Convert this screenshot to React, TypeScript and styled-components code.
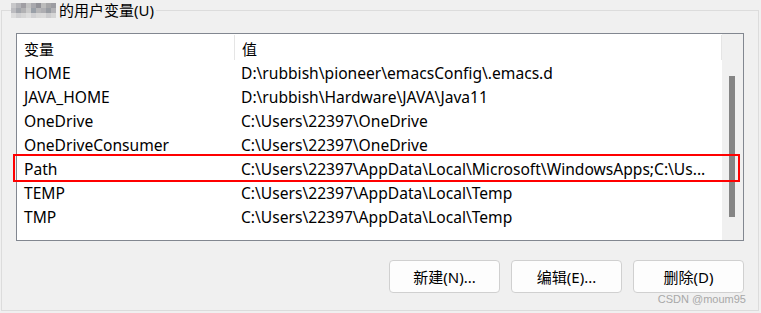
import React from "react";
import styled, { createGlobalStyle } from "styled-components";

const GlobalStyle = createGlobalStyle`
  html, body {
    margin: 0;
    padding: 0;
    background: #f0f0f0;
  }
  body {
    font-family: "Noto Sans", "Noto Sans CJK SC", sans-serif;
    color: #000;
  }
`;

const Page = styled.div`
  position: relative;
  width: 761px;
  height: 313px;
  padding: 0 0 0 1px;
  box-sizing: border-box;
  overflow: hidden;
`;

const Group = styled.fieldset`
  margin: 0;
  width: 758px;
  height: 311px;
  box-sizing: border-box;
  border: 1px solid #dcdcdc;
  padding: 12px 14px 17px 14px;
  display: flex;
  flex-direction: column;
`;

const Legend = styled.legend`
  margin-left: -5px;
  padding: 0 2px 0 0;
  font-size: 15px;
  line-height: 21px;
  display: flex;
  align-items: center;
  gap: 1px;
`;

const Mosaic = styled.span`
  display: inline-grid;
  grid-template-columns: repeat(9, 5px);
  grid-template-rows: repeat(3, 5px);
  margin-right: 2px;
`;

const Pixel = styled.span<{ $c: string }>`
  background: ${(p) => p.$c};
`;

const ListBox = styled.div`
  height: 208px;
  box-sizing: border-box;
  border: 1px solid #828790;
  background: #fff;
  display: grid;
  grid-template-columns: 1fr 21px;
`;

const Table = styled.div`
  display: flex;
  flex-direction: column;
  min-width: 0;
`;

const HeaderRow = styled.div`
  display: grid;
  grid-template-columns: 217px 487px 1px;
  height: 27px;
  align-items: center;
  font-size: 15px;
`;

const HeaderCell = styled.div`
  padding-left: 7px;
  padding-top: 1px;
`;

const HeaderDivider = styled.div`
  width: 1px;
  height: 25px;
  align-self: start;
  margin-top: 1px;
  background: #e5e5e5;
`;

const HeaderCellWrap = styled.div`
  display: flex;
  align-items: center;
  height: 100%;
`;

const Row = styled.div`
  position: relative;
  display: grid;
  grid-template-columns: 218px 487px;
  height: 24px;
  align-items: center;
  font-size: 15.6px;
  white-space: nowrap;
`;

const NameCell = styled.div`
  padding-left: 7px;
  overflow: hidden;
`;

const ValueCell = styled.div`
  padding-left: 6px;
  overflow: hidden;
  text-overflow: ellipsis;
`;

const Highlight = styled.div`
  position: absolute;
  z-index: 2;
  left: -4px;
  top: -3px;
  width: 727px;
  height: 28px;
  box-sizing: border-box;
  border: 2px solid #ff0000;
  pointer-events: none;
`;

const ScrollTrack = styled.div`
  background: #f0f0f0;
  position: relative;
`;

const ScrollThumb = styled.div`
  position: absolute;
  left: 7px;
  top: 42px;
  width: 6px;
  height: 141px;
  background: #858585;
`;

const ButtonBar = styled.div`
  display: flex;
  justify-content: flex-end;
  gap: 11px;
  margin-top: 19px;
`;

const Button = styled.button`
  width: 111px;
  height: 33px;
  box-sizing: border-box;
  background: #fdfdfd;
  border: 1px solid #d0d0d0;
  border-radius: 4px;
  font-family: "Noto Sans", "Noto Sans CJK SC", sans-serif;
  font-size: 15px;
  color: #000;
  padding: 0;
`;

const Watermark = styled.div`
  position: absolute;
  right: 15px;
  top: 293px;
  font-family: "Liberation Sans", "Noto Sans", sans-serif;
  font-size: 11px;
  color: #a8a8a8;
`;

const mosaicColors = [
  "#c8c8ca", "#b4b4b8", "#a09ea3", "#c2c2c2", "#a8a8ad", "#929298", "#bcbcbc", "#a6a6a8", "#9c9ca2",
  "#bcbcc0", "#a2a5ab", "#b2b2b4", "#cacaca", "#9aa0a8", "#b6b6b8", "#aeaeb2", "#989ca2", "#b2b2b6",
  "#dcdcdc", "#cfcfd1", "#d6d6d6", "#dedede", "#d0d0d2", "#d8d8d8", "#dadada", "#ccccce", "#d6d6d6",
];

const vars = [
  { name: "HOME", value: "D:\\rubbish\\pioneer\\emacsConfig\\.emacs.d" },
  { name: "JAVA_HOME", value: "D:\\rubbish\\Hardware\\JAVA\\Java11" },
  { name: "OneDrive", value: "C:\\Users\\22397\\OneDrive" },
  { name: "OneDriveConsumer", value: "C:\\Users\\22397\\OneDrive" },
  {
    name: "Path",
    value: "C:\\Users\\22397\\AppData\\Local\\Microsoft\\WindowsApps;C:\\Us...",
    marked: true,
  },
  { name: "TEMP", value: "C:\\Users\\22397\\AppData\\Local\\Temp" },
  { name: "TMP", value: "C:\\Users\\22397\\AppData\\Local\\Temp" },
];

export default function App() {
  return (
    <Page>
      <GlobalStyle />
      <Group>
        <Legend>
          <Mosaic>
            {mosaicColors.map((c, i) => (
              <Pixel key={i} $c={c} />
            ))}
          </Mosaic>
          的用户变量(U)
        </Legend>
        <ListBox>
          <Table>
            <HeaderRow>
              <HeaderCellWrap>
                <HeaderCell>变量</HeaderCell>
              </HeaderCellWrap>
              <HeaderCellWrap>
                <HeaderDivider />
                <HeaderCell>值</HeaderCell>
              </HeaderCellWrap>
              <HeaderDivider />
            </HeaderRow>
            {vars.map((v) => (
              <Row key={v.name}>
                <NameCell>{v.name}</NameCell>
                <ValueCell>{v.value}</ValueCell>
                {v.marked && <Highlight />}
              </Row>
            ))}
          </Table>
          <ScrollTrack>
            <ScrollThumb />
          </ScrollTrack>
        </ListBox>
        <ButtonBar>
          <Button>新建(N)...</Button>
          <Button>编辑(E)...</Button>
          <Button>删除(D)</Button>
        </ButtonBar>
      </Group>
      <Watermark>CSDN @moum95</Watermark>
    </Page>
  );
}
